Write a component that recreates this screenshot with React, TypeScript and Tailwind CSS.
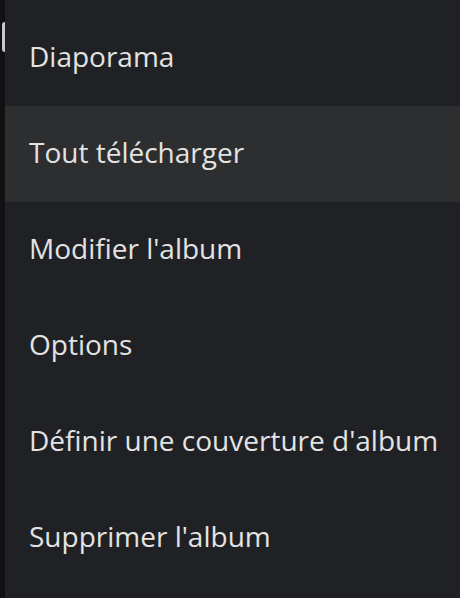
import React from "react";

const items = [
  "Diaporama",
  "Tout télécharger",
  "Modifier l'album",
  "Options",
  "Définir une couverture d'album",
  "Supprimer l'album",
];

export default function App() {
  return (
    <div className="flex h-[598px] w-[460px] bg-[#111111] overflow-hidden" style={{ fontFamily: "'Open Sans', Roboto, sans-serif" }}>
      <div className="relative w-[5px] shrink-0">
        <div className="absolute left-[2px] top-[22px] h-[30px] w-[3px] rounded-l-sm bg-[#c8c8c8]" />
      </div>
      <div className="flex-1 bg-[#202124] pt-[10px]">
        {items.map((t, i) => (
          <div
            key={t}
            className={`flex h-[96px] items-center pb-[4px] pl-[24px] text-[28px] text-[#e3e3e3] ${i === 1 ? "bg-[#2d2e30]" : ""}`}
          >
            {t}
          </div>
        ))}
      </div>
    </div>
  );
}
